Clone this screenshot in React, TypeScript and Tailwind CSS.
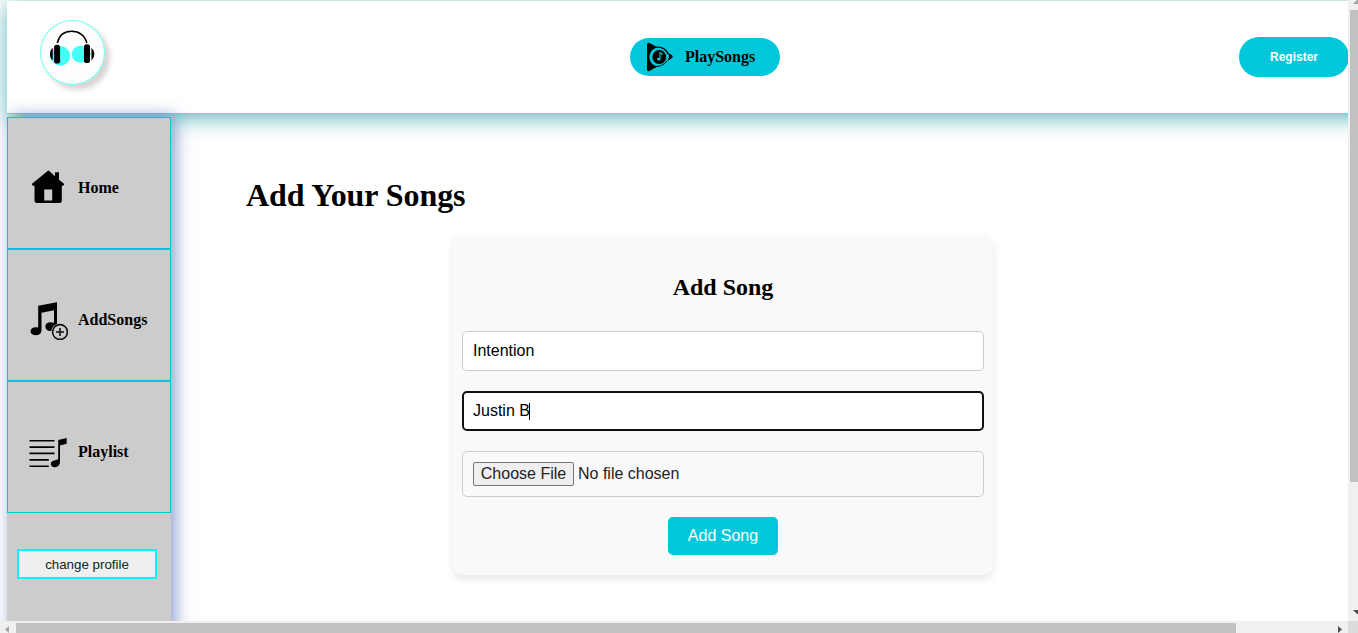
import type { ReactNode } from "react";

function HeadphonesLogo() {
  return (
    <svg viewBox="0 0 65 65" className="size-[65px]">
      <circle cx="20.5" cy="36" r="9.7" fill="#43fff8" />
      <circle cx="40.3" cy="34.3" r="8.5" fill="#43fff8" />
      <path d="M50 32.7l5 1.5-5 1.5z" fill="#43fff8" />
      <path d="M17.3 23C19 15.500 24.500 11.200 31.800 11.200S45 15.500 46.800 23" fill="none" stroke="#000" strokeWidth="1.500" />
      <rect x="14.100" y="24.800" width="6" height="18.800" rx="2.700" />
      <rect x="44" y="24.300" width="6" height="18.800" rx="2.700" />
      <path d="M12.700 27.800v12.800C9.100 38 9.100 30.300 12.700 27.800zM51 27.800v12.800C55.400 38 55.400 30.300 51 27.800z" />
      <path d="M51.200 28v12" stroke="#fff" strokeWidth=".6" />
    </svg>
  );
}

function PlayIcon() {
  return (
    <svg viewBox="0 0 28 30" className="h-[30px] w-[28px] shrink-0">
      <path d="M1 2.500Q1 .2 3.500 1L25.500 13Q27.500 14.700 25.500 16.300L3.500 29Q1 30 1 27.500z" />
      <circle cx="13.300" cy="15" r="10" fill="#00c8da" />
      <path d="M6.500 6.700C12 3.600 19 5 22.500 12.500" fill="none" stroke="#000" strokeWidth="1.300" />
      <path d="M23.300 11.800L25.500 13Q27.500 14.700 25.500 16.300L21.500 18.700Q23.600 15.500 23.300 11.800z" />
      <path d="M8 24.300Q16 25.500 21.500 18.500" fill="none" stroke="#000" strokeWidth="1" />
      <circle cx="13.300" cy="15" r="6.900" />
      <ellipse cx="12.700" cy="17.200" rx="1.700" ry="1.400" fill="#00c8da" />
      <path d="M13.900 17.200v-6.400l2 .6v1.500" fill="none" stroke="#00c8da" strokeWidth="1.100" />
    </svg>
  );
}

function HomeIcon() {
  return (
    <svg viewBox="0 0 40 40" className="size-10">
      <path d="M20 2.700L4 15.800Q3.500 17.700 5.500 17.700H6.500V32.700Q6.500 35 9 35H31.500Q33.800 35 33.800 32.700V17.700H34.500Q36.500 17.700 36 15.800L31 11.700V4.700Q31 4.200 30.500 4.200H27.500Q27 4.200 27 4.700V8.200L21.500 3.200Q20.700 2.200 20 2.700z" />
      <path d="M16.200 21.500h8v11h-8z" fill="#ccc" />
    </svg>
  );
}

function AddSongsIcon() {
  return (
    <svg viewBox="0 0 40 40" className="size-10">
      <path d="M10.200 5.800L29 2.200V23.500H26V10.200L13.500 12.800V30C13.500 33.500 10.800 35.200 7.800 35.200C1.200 35.200.8 27.800 7 27.200Q8.800 27 10.200 27.500z" />
      <path d="M29 20V26H17.500C17.500 22.500 22 21.500 26 23V20z" />
      <ellipse cx="22" cy="27" rx="4.600" ry="4" />
      <circle cx="32" cy="32" r="8.700" fill="#ccc" />
      <circle cx="32" cy="32" r="7.400" fill="none" stroke="#111" strokeWidth="1.600" />
      <path d="M32 28v8M28 32h8" stroke="#111" strokeWidth="1.600" />
    </svg>
  );
}

function PlaylistIcon() {
  return (
    <svg viewBox="0 0 40 40" className="size-10">
      <path d="M1.500 8.800H26.500M1.500 15.100H26.500M1.500 21.400H26.500M1.500 27.900H20.800M1.500 34.300H20.800" stroke="#000" strokeWidth="1.600" />
      <path d="M30.200 8L38.700 6V11.800L32 13.500V29C32 33 30 35.200 27 35.200C21.500 35.200 21.500 28.700 27 28.200Q29 28.100 30.200 27z" />
    </svg>
  );
}

function NavItem({ icon, label }: { icon: ReactNode; label: string }) {
  return (
    <a className="flex h-[132px] items-center border border-[#00c8da] pt-[9px] pl-5 font-bold">
      {icon}
      <span className="ml-2.5">{label}</span>
    </a>
  );
}

export default function App() {
  return (
    <div className="grid h-[633px] w-[1358px] grid-cols-[1348px_10px] grid-rows-[621px_12px] overflow-hidden bg-white font-['Liberation_Serif',serif] text-base text-black">
      <div className="overflow-hidden pl-[7px]">
        <header className="mt-px flex h-[113px] w-[1400px] items-start justify-between border-b border-[#35eaf0] bg-white pr-[59px] pl-[33px] shadow-[0_4px_20px_rgba(0,145,150,0.65)]">
          <div className="mt-[19px] size-[65px] rounded-full bg-[#fdfdfd] shadow-[inset_0_0_0_1px_#70fff5,5px_5px_5px_rgba(190,183,183,0.6)]">
            <HeadphonesLogo />
          </div>
          <div className="mt-[37px] ml-[66px] flex h-[38px] w-[150px] items-center rounded-full bg-[#00c8da] pl-4 font-bold">
            <PlayIcon />
            <span className="ml-[11px]">PlaySongs</span>
          </div>
          <button className="mt-9 -mr-px h-10 w-[110px] rounded-full bg-[#00c8da] font-['Liberation_Sans',sans-serif] text-xs font-bold text-white">
            Register
          </button>
        </header>

        <div className="mt-[3px] flex">
          <aside className="relative h-[520px] w-[164px] shrink-0 bg-[#ccc] shadow-[4px_0_16px_rgba(50,85,170,0.6)]">
            <nav>
              <NavItem icon={<HomeIcon />} label="Home" />
              <NavItem icon={<AddSongsIcon />} label="AddSongs" />
              <NavItem icon={<PlaylistIcon />} label="Playlist" />
            </nav>
            <button className="mt-9 ml-2.5 h-[30px] w-[140px] border-2 border-[#00f7ff] bg-[#efefef] pt-0.5 font-['Liberation_Sans',sans-serif] text-[13.333px] text-[#082828]">
              change profile
            </button>
          </aside>

          <main className="pt-[60px] pl-[75px]">
            <h1 className="text-[32px] leading-9 font-bold tracking-[-0.08px]">Add Your Songs</h1>
            <form className="mt-[22px] ml-[207px] flex h-[340px] w-[540px] flex-col items-center rounded-[10px] bg-[#f9f9f9] px-[9px] pt-[39px] font-['Liberation_Sans',sans-serif] shadow-[0_4px_8px_rgba(0,0,0,0.1)]">
              <h2 className="font-['Liberation_Serif',serif] text-2xl leading-[27px] font-bold">Add Song</h2>
              <div className="mt-[30px] flex h-10 w-full items-center rounded-[5px] border border-[#ccc] bg-white px-2.5">
                <span>Intention</span>
              </div>
              <div className="mt-5 flex h-10 w-full items-center rounded-[5px] border-2 border-[#101010] bg-white px-[9px]">
                <span>Justin B</span>
                <span className="-ml-px h-[17px] w-px bg-black" />
              </div>
              <div className="mt-5 flex h-[46px] w-full items-center rounded-[5px] border border-[#ccc] px-2.5 text-[#222]">
                <span className="flex h-6 w-[101px] items-center justify-center rounded-[2px] border border-[#767676] bg-[#efefef] whitespace-nowrap">
                  Choose File
                </span>
                <span className="ml-1">No file chosen</span>
              </div>
              <button type="button" className="mt-5 h-[38px] w-[110px] rounded-[5px] bg-[#00c8da] text-white">
                Add Song
              </button>
            </form>
          </main>
        </div>
      </div>

      <div className="flex flex-col items-end bg-[#f0f0f0]">
        <svg viewBox="0 0 8 10" className="h-2.5 w-2">
          <path d="M3 4L7 0H8V4z" fill="#a3a3a3" />
        </svg>
        <div className="h-[472px] w-2 bg-[#c1c1c1]" />
        <svg viewBox="0 0 8 10" className="mt-[126px] h-2.5 w-2">
          <path d="M3 2H8V6H7z" fill="#505050" />
        </svg>
      </div>

      <div className="flex items-end bg-[#f0f0f0]">
        <svg viewBox="0 0 16 10" className="h-2.5 w-4">
          <path d="M9 3V10L5 6.500z" fill="#a3a3a3" />
        </svg>
        <div className="h-2.5 w-[1220px] bg-[#c1c1c1]" />
        <svg viewBox="0 0 16 10" className="ml-[96px] h-2.5 w-4">
          <path d="M6 3V10L10 6.500z" fill="#505050" />
        </svg>
      </div>
      <div className="bg-[#dcdcdc]" />
    </div>
  );
}
